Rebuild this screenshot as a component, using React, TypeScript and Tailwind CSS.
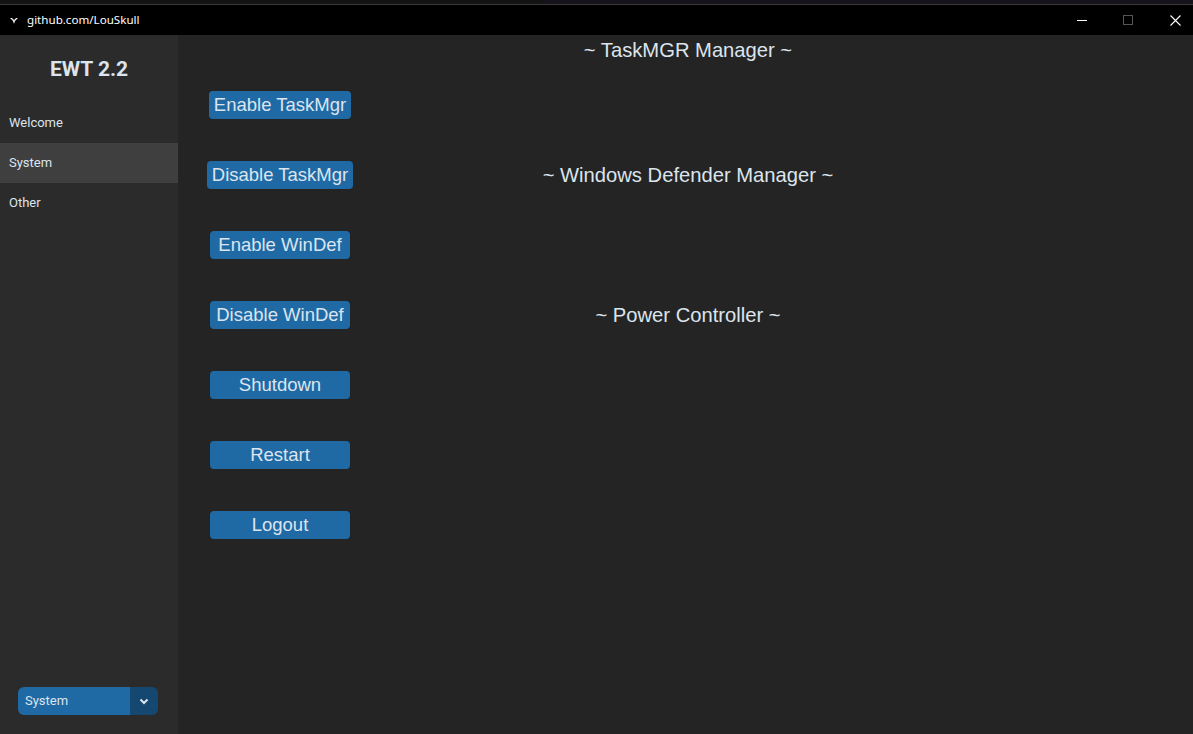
import React from "react";

const btnFont = { fontFamily: '"Liberation Sans", Arial, sans-serif' };

function Btn({ label }: { label: string }) {
  return (
    <div className="flex h-[28px] min-w-[140px] items-center justify-center rounded-[4px] bg-[#1f6aa5] px-[5px] text-[18.5px] text-[#dce4ee]" style={btnFont}>
      {label}
    </div>
  );
}

function Header({ label }: { label: string }) {
  return (
    <div className="text-[20.2px] text-[#dce4ee]" style={btnFont}>
      {label}
    </div>
  );
}

export default function App() {
  const rows: { btn: string; header?: string }[] = [
    { btn: "Enable TaskMgr" },
    { btn: "Disable TaskMgr", header: "~ Windows Defender Manager ~" },
    { btn: "Enable WinDef" },
    { btn: "Disable WinDef", header: "~ Power Controller ~" },
    { btn: "Shutdown" },
    { btn: "Restart" },
    { btn: "Logout" },
  ];
  return (
    <div className="flex h-[734px] w-[1193px] flex-col overflow-hidden bg-[#242424]" style={{ fontFamily: "Roboto, sans-serif" }}>
      {/* strip of window behind */}
      <div className="flex h-[5px] border-b border-[#3a3a3a]">
        <div className="w-[545px] bg-[#141414]"></div>
        <div className="flex-1 bg-[#17131c]"></div>
      </div>
      {/* title bar */}
      <div className="flex h-[30px] items-center bg-black text-white">
        <svg width="10" height="10" viewBox="0 0 10 10" className="ml-[9px]">
          <path d="M1 3 L5 7 L9 3 L7 3 L5 5 L3 3 Z" fill="#e8e8e8" />
          <path d="M4 6 L5 9 L6 6 Z" fill="#e8e8e8" />
        </svg>
        <span className="ml-[8px] text-[11.6px]" style={{ fontFamily: '"Noto Sans", "Open Sans", sans-serif' }}>github.com/LouSkull</span>
        <div className="flex-1" />
        <div className="flex h-full w-[46px] items-center justify-center">
          <div className="h-px w-[10px] bg-white" />
        </div>
        <div className="mr-[6px] flex h-full w-[46px] items-center justify-center">
          <div className="h-[10px] w-[10px] border border-[#555]" />
        </div>
        <div className="flex h-full w-[36px] items-center justify-center">
          <svg width="11" height="11" viewBox="0 0 11 11">
            <path d="M0.5 0.5 L10.5 10.5 M10.5 0.5 L0.5 10.5" stroke="#fff" strokeWidth="1.1" />
          </svg>
        </div>
      </div>
      <div className="flex flex-1">
        {/* sidebar */}
        <div className="flex w-[178px] flex-col bg-[#2b2b2b]">
          <div className="flex h-[68px] items-center justify-center pt-[1px] text-[21px] font-bold text-[#dce4ee]">EWT 2.2</div>
          {["Welcome", "System", "Other"].map((n) => (
            <div key={n} className={`flex h-[40px] items-center pl-[9px] text-[13px] text-[#dce4ee] ${n === "System" ? "bg-[#3f3f3f]" : ""}`}>
              {n}
            </div>
          ))}
          <div className="flex-1" />
          <div className="mb-[19px] ml-[18px] flex h-[28px] w-[140px] overflow-hidden rounded-[6px]">
            <div className="flex flex-1 items-center bg-[#1f6aa5] pl-[7px] text-[13px] text-[#dce4ee]">System</div>
            <div className="flex w-[28px] items-center justify-center bg-[#144870]">
              <svg width="10" height="7" viewBox="0 0 10 7">
                <path d="M1.5 1.5 L5 5 L8.5 1.5" stroke="#dce4ee" strokeWidth="2" fill="none" />
              </svg>
            </div>
          </div>
        </div>
        {/* main */}
        <div className="flex flex-1 flex-col">
          <div className="grid h-[35px] grid-cols-[204px_612px]">
            <div />
            <div className="flex items-center justify-center pb-[7px]">
              <Header label="~ TaskMGR Manager ~" />
            </div>
          </div>
          {rows.map((r) => (
            <div key={r.btn} className="grid h-[70px] grid-cols-[204px_612px]">
              <div className="flex items-center justify-center">
                <Btn label={r.btn} />
              </div>
              <div className="flex items-center justify-center">{r.header && <Header label={r.header} />}</div>
            </div>
          ))}
        </div>
      </div>
    </div>
  );
}
